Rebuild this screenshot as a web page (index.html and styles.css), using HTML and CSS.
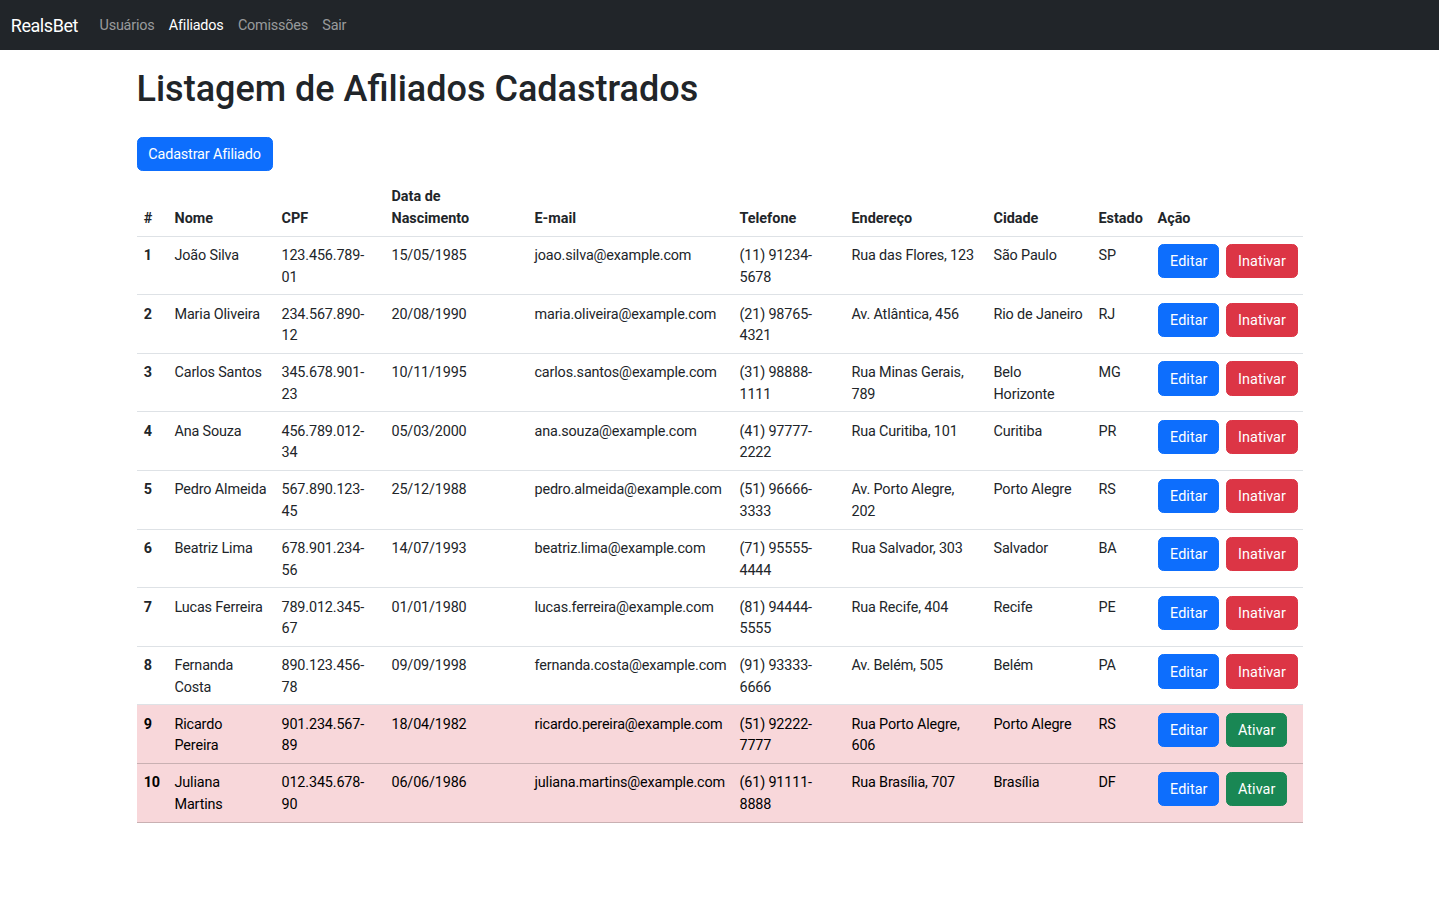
FILE: index.html
```html
<!DOCTYPE html>
<html lang="pt-BR">
<head>
<meta charset="utf-8">
<title>RealsBet - Afiliados</title>
<link rel="stylesheet" href="styles.css">
</head>
<body>
<nav class="navbar">
  <a class="brand" href="#">RealsBet</a>
  <ul class="nav">
    <li><a class="nav-link" href="#">Usuários</a></li>
    <li><a class="nav-link active" href="#">Afiliados</a></li>
    <li><a class="nav-link" href="#">Comissões</a></li>
    <li><a class="nav-link" href="#">Sair</a></li>
  </ul>
</nav>
<main class="container">
  <h1 class="title">Listagem de Afiliados Cadastrados</h1>
  <a class="btn btn-primary btn-new" href="#">Cadastrar Afiliado</a>
  <table class="table">
    <colgroup>
      <col class="w-num"><col class="w-nome"><col class="w-cpf"><col class="w-data"><col class="w-email"><col class="w-tel"><col class="w-end"><col class="w-cid"><col class="w-uf"><col class="w-acao">
    </colgroup>
    <thead>
      <tr><th>#</th><th>Nome</th><th>CPF</th><th>Data de Nascimento</th><th>E-mail</th><th>Telefone</th><th>Endereço</th><th>Cidade</th><th>Estado</th><th>Ação</th></tr>
    </thead>
    <tbody>
      <tr><th>1</th><td>João Silva</td><td>123.456.789-01</td><td>15/05/1985</td><td>joao.silva@example.com</td><td>(11) 91234-5678</td><td>Rua das Flores, 123</td><td>São Paulo</td><td>SP</td><td><div class="actions"><a class="btn btn-primary" href="#">Editar</a><a class="btn btn-danger" href="#">Inativar</a></div></td></tr>
      <tr><th>2</th><td>Maria Oliveira</td><td>234.567.890-12</td><td>20/08/1990</td><td>maria.oliveira@example.com</td><td>(21) 98765-4321</td><td>Av. Atlântica, 456</td><td>Rio de Janeiro</td><td>RJ</td><td><div class="actions"><a class="btn btn-primary" href="#">Editar</a><a class="btn btn-danger" href="#">Inativar</a></div></td></tr>
      <tr><th>3</th><td>Carlos Santos</td><td>345.678.901-23</td><td>10/11/1995</td><td>carlos.santos@example.com</td><td>(31) 98888-1111</td><td>Rua Minas Gerais, 789</td><td>Belo Horizonte</td><td>MG</td><td><div class="actions"><a class="btn btn-primary" href="#">Editar</a><a class="btn btn-danger" href="#">Inativar</a></div></td></tr>
      <tr><th>4</th><td>Ana Souza</td><td>456.789.012-34</td><td>05/03/2000</td><td>ana.souza@example.com</td><td>(41) 97777-2222</td><td>Rua Curitiba, 101</td><td>Curitiba</td><td>PR</td><td><div class="actions"><a class="btn btn-primary" href="#">Editar</a><a class="btn btn-danger" href="#">Inativar</a></div></td></tr>
      <tr><th>5</th><td>Pedro Almeida</td><td>567.890.123-45</td><td>25/12/1988</td><td>pedro.almeida@example.com</td><td>(51) 96666-3333</td><td>Av. Porto Alegre, 202</td><td>Porto Alegre</td><td>RS</td><td><div class="actions"><a class="btn btn-primary" href="#">Editar</a><a class="btn btn-danger" href="#">Inativar</a></div></td></tr>
      <tr><th>6</th><td>Beatriz Lima</td><td>678.901.234-56</td><td>14/07/1993</td><td>beatriz.lima@example.com</td><td>(71) 95555-4444</td><td>Rua Salvador, 303</td><td>Salvador</td><td>BA</td><td><div class="actions"><a class="btn btn-primary" href="#">Editar</a><a class="btn btn-danger" href="#">Inativar</a></div></td></tr>
      <tr><th>7</th><td>Lucas Ferreira</td><td>789.012.345-67</td><td>01/01/1980</td><td>lucas.ferreira@example.com</td><td>(81) 94444-5555</td><td>Rua Recife, 404</td><td>Recife</td><td>PE</td><td><div class="actions"><a class="btn btn-primary" href="#">Editar</a><a class="btn btn-danger" href="#">Inativar</a></div></td></tr>
      <tr><th>8</th><td>Fernanda Costa</td><td>890.123.456-78</td><td>09/09/1998</td><td>fernanda.costa@example.com</td><td>(91) 93333-6666</td><td>Av. Belém, 505</td><td>Belém</td><td>PA</td><td><div class="actions"><a class="btn btn-primary" href="#">Editar</a><a class="btn btn-danger" href="#">Inativar</a></div></td></tr>
      <tr class="row-danger"><th>9</th><td>Ricardo Pereira</td><td>901.234.567-89</td><td>18/04/1982</td><td>ricardo.pereira@example.com</td><td>(51) 92222-7777</td><td>Rua Porto Alegre, 606</td><td>Porto Alegre</td><td>RS</td><td><div class="actions"><a class="btn btn-primary" href="#">Editar</a><a class="btn btn-success" href="#">Ativar</a></div></td></tr>
      <tr class="row-danger"><th>10</th><td>Juliana Martins</td><td>012.345.678-90</td><td>06/06/1986</td><td>juliana.martins@example.com</td><td>(61) 91111-8888</td><td>Rua Brasília, 707</td><td>Brasília</td><td>DF</td><td><div class="actions"><a class="btn btn-primary" href="#">Editar</a><a class="btn btn-success" href="#">Ativar</a></div></td></tr>
    </tbody>
  </table>
</main>
</body>
</html>
```

FILE: styles.css
```css
* { box-sizing: border-box; }

body {
  margin: 0;
  font-family: Roboto, "Noto Sans", "Liberation Sans", sans-serif;
  font-size: 14.4px;
  line-height: 1.5;
  letter-spacing: -0.15px;
  color: #212529;
  background: #fff;
}

a { text-decoration: none; }

.navbar {
  display: flex;
  align-items: center;
  background: #212529;
  padding: 7.2px 10.8px;
}

.brand {
  font-size: 18px;
  line-height: 27px;
  padding: 5px 0 4px;
  margin-right: 14.4px;
  letter-spacing: -0.45px;
  color: #fff;
}

.nav {
  display: flex;
  list-style: none;
  margin: 0;
  padding: 0;
}

.nav-link {
  display: block;
  padding: 8px 7.2px 6.4px;
  line-height: 21.6px;
  letter-spacing: -0.2px;
  color: rgba(255, 255, 255, 0.55);
}

.nav-link.active { color: #fff; }

.container {
  width: 1166px;
  margin: 0 auto;
}

.title {
  font-size: 36px;
  font-weight: 500;
  line-height: 1.2;
  letter-spacing: 0;
  margin: 18px 0 25px;
}

.btn {
  display: inline-block;
  padding: 6.3px 10.8px 4.3px;
  border: 1px solid transparent;
  border-radius: 5.4px;
  line-height: 21.6px;
  color: #fff;
  white-space: nowrap;
}

.btn-primary { background: #0d6efd; border-color: #0d6efd; }
.btn-danger { background: #dc3545; border-color: #dc3545; }
.btn-success { background: #198754; border-color: #198754; }

.btn-new { margin-bottom: 7.2px; }

.table {
  width: 100%;
  border-collapse: collapse;
  table-layout: fixed;
}

.table th,
.table td {
  padding: 8.4px 7.2px 6px;
  border-bottom: 1px solid #dee2e6;
  text-align: left;
  vertical-align: top;
}

.table thead th {
  vertical-align: bottom;
  letter-spacing: 0;
}

.table th { font-weight: 700; }

.row-danger th,
.row-danger td {
  background: #f8d7da;
  color: #000;
  border-bottom-color: #c9b0b2;
}

.actions {
  display: flex;
  gap: 7px;
  margin-top: -0.8px;
  padding-left: 0.8px;
}

.actions .btn { letter-spacing: 0.05px; }

.w-num { width: 30.8px; }
.w-nome { width: 107px; }
.w-cpf { width: 110px; }
.w-data { width: 143px; }
.w-email { width: 205px; }
.w-tel { width: 112px; }
.w-end { width: 142px; }
.w-cid { width: 105px; }
.w-uf { width: 59px; }
.w-acao { width: 152.2px; }
```
